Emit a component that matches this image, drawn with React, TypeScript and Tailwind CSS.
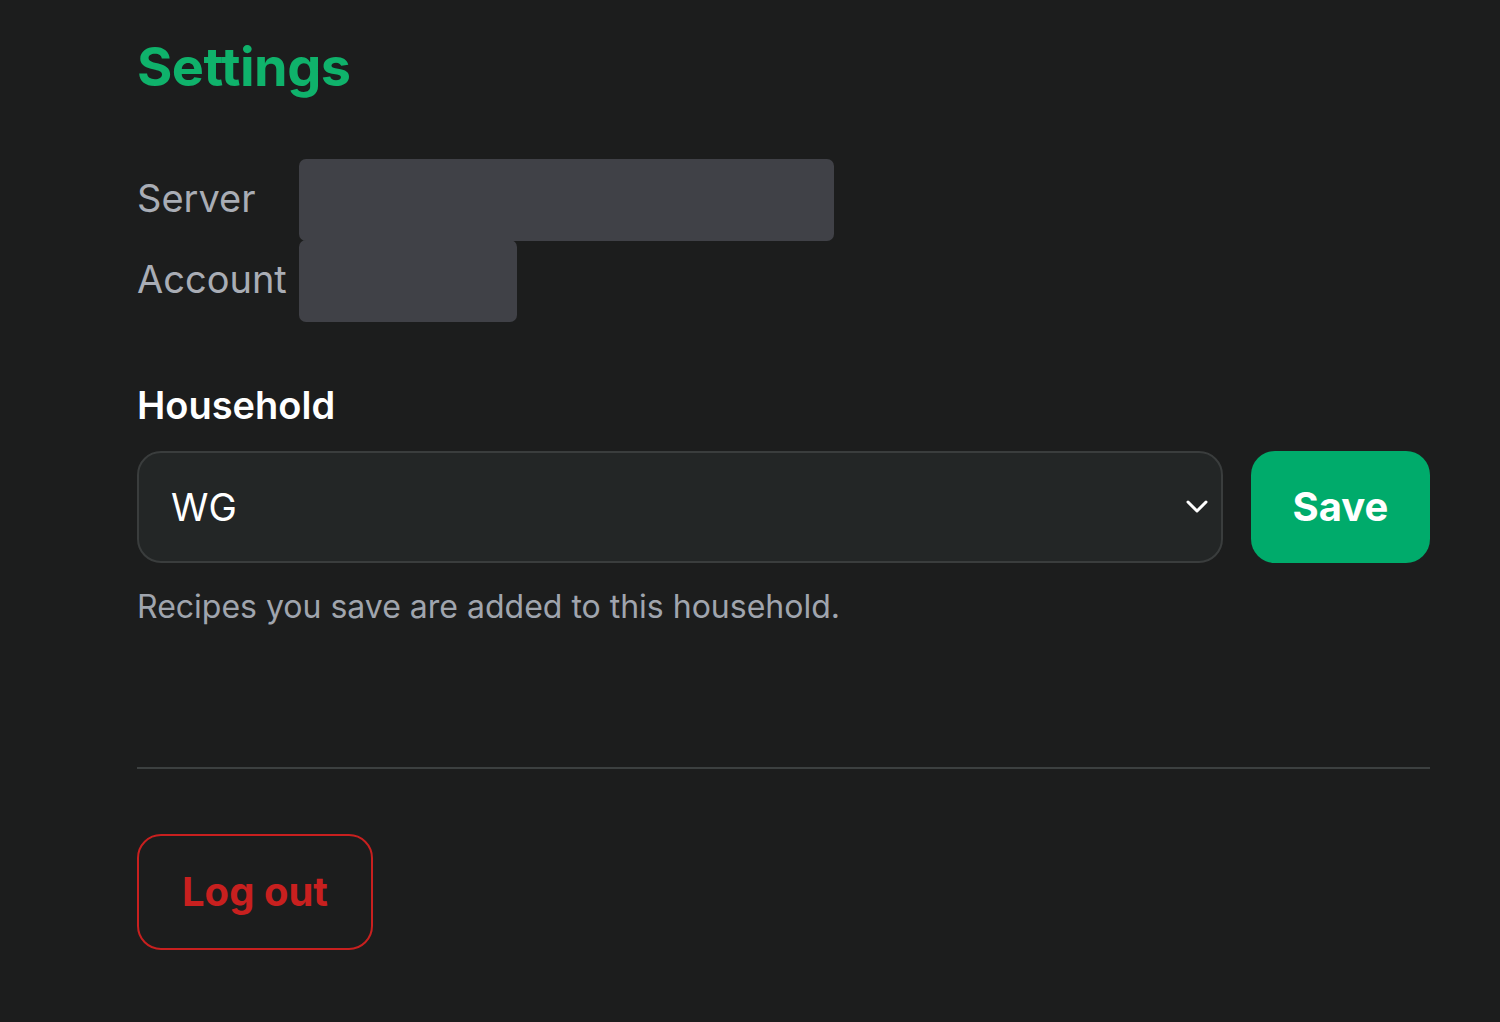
import React from "react";

const households = ["WG", "Family", "Office"];

function InfoRow({ label, width }: { label: string; width: string }) {
  return (
    <div className="flex h-[81px] items-center">
      <span className="w-[162px] shrink-0 pb-[4px] text-[38px] leading-none text-[#a9adb5]">{label}</span>
      <span className={`h-[82px] rounded-[7px] bg-[#404147] ${width}`} aria-label="redacted" />
    </div>
  );
}

export default function App() {
  const [household, setHousehold] = React.useState("WG");

  return (
    <div
      className="min-h-[1022px] w-full bg-[#1c1d1d] pl-[137px] pt-[36px]"
      style={{ fontFamily: "Inter, 'Noto Sans', sans-serif" }}
    >
      <div className="w-[1293px]">
        <h1 className="text-[54px] font-bold leading-[62px] tracking-[-0.01em] text-[#0fb26b]">Settings</h1>

        <div className="mt-[61px] flex flex-col">
          <InfoRow label="Server" width="w-[535px]" />
          <InfoRow label="Account" width="w-[218px]" />
        </div>

        <label htmlFor="household" className="mt-[62px] block text-[38px] font-semibold leading-[44px] text-white">
          Household
        </label>

        <div className="mt-[24px] flex items-center gap-[28px]">
          <div className="relative flex-1">
            <select
              id="household"
              value={household}
              onChange={(event) => setHousehold(event.target.value)}
              className="h-[112px] w-full appearance-none rounded-[24px] border-2 border-[#3a3d3d] bg-[#232626] pl-[32px] text-[38px] text-white outline-none"
            >
              {households.map((name) => (
                <option key={name} value={name}>
                  {name}
                </option>
              ))}
            </select>
            <svg
              className="pointer-events-none absolute right-[14px] top-1/2 h-[24px] w-[24px] -translate-y-1/2"
              viewBox="0 0 24 24"
              fill="none"
              stroke="white"
              strokeWidth="3"
              strokeLinecap="round"
              strokeLinejoin="round"
            >
              <polyline points="3,7 12,16 21,7" />
            </svg>
          </div>
          <button
            type="button"
            className="h-[112px] w-[179px] rounded-[24px] bg-[#00ab6b] text-[40px] font-bold text-white"
          >
            Save
          </button>
        </div>

        <p className="mt-[25px] text-[32px] leading-[38px] text-[#a0a5ae]">Recipes you save are added to this household.</p>

        <div className="mt-[141px] h-[2px] w-full bg-[#3c4040]" />

        <button
          type="button"
          className="mt-[65px] h-[116px] w-[236px] rounded-[24px] border-2 border-[#c8201f] text-[40px] font-bold text-[#c8201f]"
        >
          Log out
        </button>
      </div>
    </div>
  );
}
